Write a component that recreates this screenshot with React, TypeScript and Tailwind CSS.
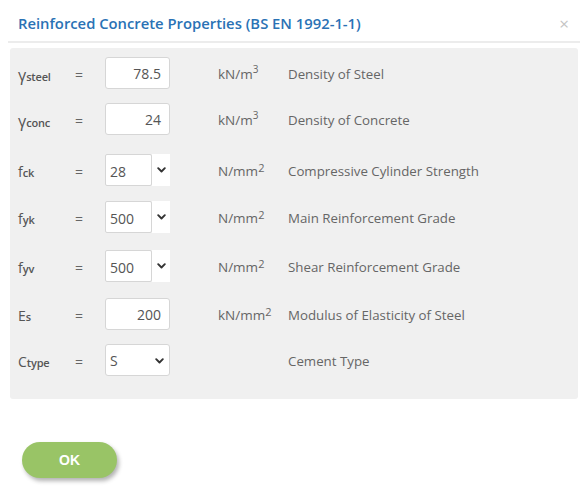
import React from "react";

const font = { fontFamily: '"Open Sans", "Noto Sans", sans-serif' };

function Chevron() {
  return (
    <svg width="9" height="6" viewBox="0 0 9 6" className="block">
      <path d="M1.2 1.2 L4.5 4.5 L7.8 1.2" fill="none" stroke="#333" strokeWidth="1.9" strokeLinecap="round" strokeLinejoin="round" />
    </svg>
  );
}

type Row = {
  sym: string;
  sub: string;
  greek?: boolean;
  kind: "input" | "combo" | "select";
  value: string;
  unit: React.ReactNode;
  desc: string;
  mt: string;
};

const m3 = <>kN/m<sup className="text-[10px] relative -top-[6px]">3</sup></>;
const nmm2 = <>N/mm<sup className="text-[11px] relative -top-[4px]">2</sup></>;
const knmm2 = <>kN/mm<sup className="text-[11px] relative -top-[4px]">2</sup></>;

const rows: Row[] = [
  { sym: "γ", sub: "steel", greek: true, kind: "input", value: "78.5", unit: m3, desc: "Density of Steel", mt: "mt-0" },
  { sym: "γ", sub: "conc", greek: true, kind: "input", value: "24", unit: m3, desc: "Density of Concrete", mt: "mt-[14px]" },
  { sym: "f", sub: "ck", kind: "combo", value: "28", unit: nmm2, desc: "Compressive Cylinder Strength", mt: "mt-[19px]" },
  { sym: "f", sub: "yk", kind: "combo", value: "500", unit: nmm2, desc: "Main Reinforcement Grade", mt: "mt-[15px]" },
  { sym: "f", sub: "yv", kind: "combo", value: "500", unit: nmm2, desc: "Shear Reinforcement Grade", mt: "mt-[17px]" },
  { sym: "E", sub: "s", kind: "input", value: "200", unit: knmm2, desc: "Modulus of Elasticity of Steel", mt: "mt-[16px]" },
  { sym: "C", sub: "type", kind: "select", value: "S", unit: null, desc: "Cement Type", mt: "mt-[14px]" },
];

export default function App() {
  return (
    <div className="w-[588px] h-[500px] bg-white relative" style={font}>
      <div className="flex items-center justify-between pl-[18px] pr-[19px] pt-[7px] h-[40px]">
        <div className="text-[14.8px] text-[#2a72b5] font-semibold">
          Reinforced Concrete Properties (BS EN 1992-1-1)
        </div>
        <div className="text-[#c4c4c4] text-[17px] leading-none">×</div>
      </div>
      <div className="mx-[8px] mt-[1px] h-[2px] bg-[#ececec]" />
      <div className="mx-[10px] mt-[5px] bg-[#f0f0f0] rounded-[3px] pt-[9px] pb-[23px] w-[568px]">
        {rows.map((r, i) => (
          <div key={i} className={`flex items-center h-[32px] ${r.mt}`}>
            <div className="w-[65px] pl-[8px] pt-[3px] text-[#555] text-[14px] flex items-baseline">
              <span className={r.greek ? "text-[16px]" : ""}>{r.sym}</span>
              <span className="text-[11px] font-semibold tracking-[-0.2px]">{r.sub}</span>
            </div>
            <div className="w-[30px] pt-[3px] text-[#666] text-[14px]">=</div>
            <div className="w-[65px] h-[32px]">
              {r.kind === "input" && (
                <div className="w-full h-full bg-white border border-[#d6d6d6] rounded-[3px] flex items-center justify-end pr-[8px] pt-[1px] text-[14px] text-[#555]">
                  {r.value}
                </div>
              )}
              {r.kind === "combo" && (
                <div className="w-full h-full flex">
                  <div className="w-[47px] h-full bg-white border border-[#d6d6d6] rounded-[2px] flex items-center pl-[4px] text-[14px] text-[#555] pt-[2px]">
                    {r.value}
                  </div>
                  <div className="flex-1 h-full bg-white flex items-center justify-center">
                    <Chevron />
                  </div>
                </div>
              )}
              {r.kind === "select" && (
                <div className="w-full h-full bg-white border border-[#d6d6d6] rounded-[3px] flex items-center justify-between pl-[4px] pr-[5px] pt-[1px] text-[14px] text-[#555]">
                  <span>{r.value}</span>
                  <Chevron />
                </div>
              )}
            </div>
            <div className="w-[48px]" />
            <div className="w-[70px] pt-[3px] text-[13.5px] text-[#666]">{r.unit}</div>
            <div className="pt-[3px] text-[13.3px] text-[#666]">{r.desc}</div>
          </div>
        ))}
      </div>
      <div className="pl-[22px] mt-[43px]">
        <button
          className="w-[95px] h-[36px] rounded-full bg-[#99c466] text-white font-bold text-[14px] shadow-[2px_3px_4px_rgba(0,0,0,0.3)]"
          style={{ fontFamily: '"Liberation Sans", Arial, sans-serif' }}
        >
          OK
        </button>
      </div>
    </div>
  );
}
